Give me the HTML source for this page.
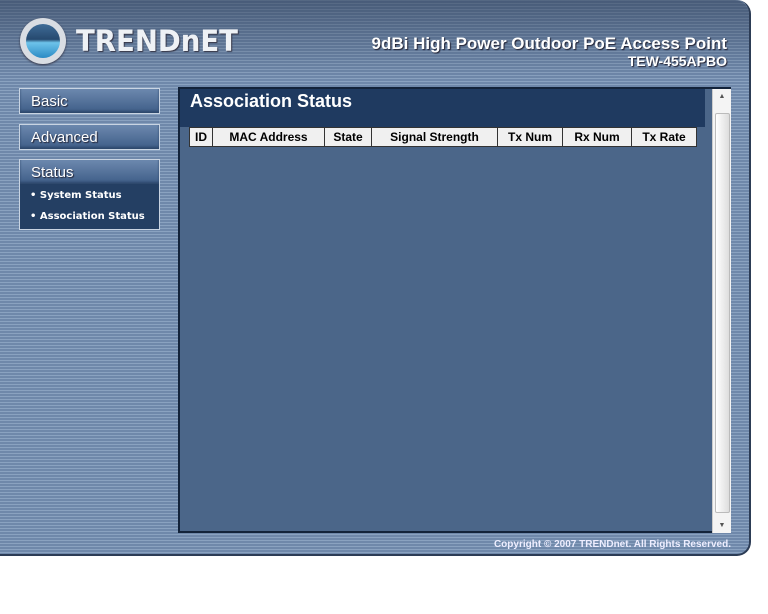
<!DOCTYPE html>
<html><head><style>
body{margin:0;width:768px;height:614px;background:#fff;position:relative;overflow:hidden;font-family:"Liberation Sans",Arial,sans-serif}
#panel{position:absolute;left:0;top:0;width:749px;height:554px;border:2px solid #2c3c55;border-left:none;border-top:none;border-radius:0 14px 14px 0;
background:repeating-linear-gradient(180deg,#8aa2c0 0,#8aa2c0 1px,#6f88aa 1px,#6f88aa 3px);}
#panel:before{content:"";position:absolute;left:0;top:0;right:0;height:80px;background:linear-gradient(180deg,rgba(40,55,80,.55),rgba(40,55,80,0) 100%);border-radius:0 14px 0 0}
.logo{position:absolute;left:20px;top:18px;display:flex;align-items:center}
.circ{width:46px;height:46px;border-radius:50%;background:#d9dde3;position:relative;box-shadow:0 1px 2px #334}
.circ i{position:absolute;left:6px;top:6px;width:34px;height:34px;border-radius:50%;background:linear-gradient(180deg,#3f6c97 0,#26496f 45%,#6dc3ea 55%,#2b8ac4 100%)}
.tn{font-family:"DejaVu Sans",sans-serif;font-size:29px;font-weight:bold;color:#eef1f5;margin-left:10px;text-shadow:1px 1px 1px #334;transform:scaleX(0.95);transform-origin:left}
.t1{position:absolute;right:22px;top:34px;color:#fff;font-weight:bold;font-size:17px;text-shadow:1px 1px 1px #223}
.t2{position:absolute;right:22px;top:53px;color:#fff;font-weight:bold;font-size:14px;text-shadow:1px 1px 1px #223}
.btn{position:absolute;left:19px;width:141px;height:26px;border:1px solid #c9d4e2;background:linear-gradient(180deg,#6c88ae,#3e5d87);color:#fff;font-size:15px;line-height:25px;padding-left:11px;box-sizing:border-box;box-shadow:inset 0 -2px 2px #2d476b;text-shadow:1px 1px 1px #223}
.sub{position:absolute;left:19px;top:184px;width:141px;height:46px;background:#243f63;border:1px solid #c9d4e2;border-top:none;box-sizing:border-box;color:#fff;font-size:10px;font-weight:bold;font-family:"DejaVu Sans",sans-serif}
.sub div{position:absolute;left:10px}
#frame{position:absolute;left:178px;top:87px;width:553px;height:446px;background:#4b6689;border:2px solid #13233a;border-right:none;box-sizing:border-box}
.hd{position:absolute;left:0;top:0;width:525px;height:38px;background:#1f3a60;color:#fff;font-weight:bold;font-size:18px;padding:2px 0 0 10px;box-sizing:border-box}
table{position:absolute;left:9px;top:38px;border-collapse:collapse;background:#f0f0f0;font-size:12px;font-weight:bold}
td{border:1px solid #333;height:18px;padding:0;text-align:center}
.sb{position:absolute;right:0;top:0;width:18px;height:444px;background:#f4f4f4;border-left:1px solid #ccc}
.th{position:absolute;left:2px;top:24px;width:13px;height:398px;background:linear-gradient(90deg,#fff,#ddd);border:1px solid #bbb;border-radius:2px}
.copy{position:absolute;right:18px;top:539px;color:#eef;font-size:10px;font-weight:bold}
</style></head><body>
<div id="panel">
<div class="logo"><div class="circ"><i></i></div><div class="tn">TRENDnET</div></div>
<div class="t1">9dBi High Power Outdoor PoE Access Point</div>
<div class="t2">TEW-455APBO</div>
<div class="btn" style="top:88px">Basic</div>
<div class="btn" style="top:124px">Advanced</div>
<div class="btn" style="top:159px">Status</div>
<div class="sub"><div style="top:6px">• System Status</div><div style="top:27px">• Association Status</div></div>
<div id="frame">
<div class="hd">Association Status</div>
<table><tr><td style="width:22px">ID</td><td style="width:111px">MAC Address</td><td style="width:46px">State</td><td style="width:125px">Signal Strength</td><td style="width:64px">Tx Num</td><td style="width:68px">Rx Num</td><td style="width:64px">Tx Rate</td></tr></table>
<div class="sb"><div style="font-size:7px;color:#555;text-align:center;margin-top:4px">▲</div><div class="th"></div><div style="position:absolute;bottom:4px;width:18px;font-size:7px;color:#555;text-align:center">▼</div></div>
</div>
<div class="copy">Copyright © 2007 TRENDnet. All Rights Reserved.</div>
</div>
</body></html>
